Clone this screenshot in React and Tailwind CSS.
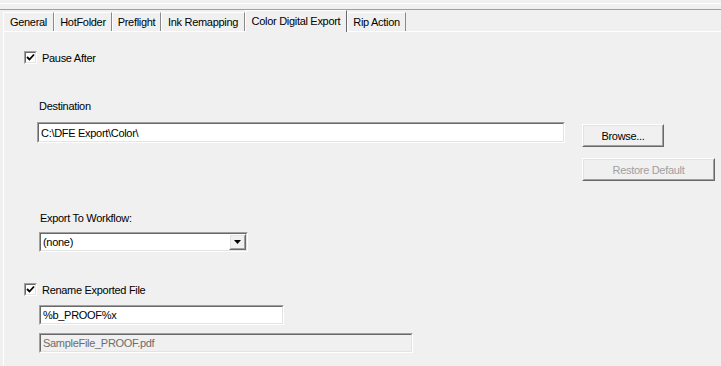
import React from 'react'

function Tab({ label, width, active }) {
  if (active) {
    return (
      <div
        className="relative z-10 -mb-px flex h-[22px] items-center justify-center border-l border-t border-r border-l-white border-t-white border-r-[#696969] bg-[#f0f0f0] pb-[2px]"
        style={{ width }}
      >
        {label}
      </div>
    )
  }
  return (
    <div
      className="flex h-[19px] items-center justify-center border-l border-t border-r border-l-white border-t-white border-r-[#8a8a8a] bg-[#f0f0f0]"
      style={{ width }}
    >
      {label}
    </div>
  )
}

function Checkbox({ label }) {
  return (
    <div className="flex h-[13px] items-center gap-[5px]">
      <div className="h-[13px] w-[13px] border-t border-l border-b border-r border-t-[#a0a0a0] border-l-[#a0a0a0] border-b-white border-r-white">
        <div className="flex h-full w-full items-center justify-center border-t border-l border-b border-r border-t-[#696969] border-l-[#696969] border-b-[#e3e3e3] border-r-[#e3e3e3] bg-white">
          <svg width="9" height="9" viewBox="0 0 9 9">
            <polyline points="1,4 3.5,6.5 8,1.5" fill="none" stroke="#000" strokeWidth="1.8" />
          </svg>
        </div>
      </div>
      <span>{label}</span>
    </div>
  )
}

function Sunken({ className, inner, children }) {
  return (
    <div className={`border-t border-l border-b border-r border-t-[#a0a0a0] border-l-[#a0a0a0] border-b-white border-r-white ${className}`}>
      <div className={`flex h-full w-full items-center border-t border-l border-b border-r border-t-[#696969] border-l-[#696969] border-b-[#e3e3e3] border-r-[#e3e3e3] ${inner}`}>
        {children}
      </div>
    </div>
  )
}

function Button({ className, disabled, children }) {
  return (
    <div className={`border-t border-l border-b border-r border-t-white border-l-white border-b-[#696969] border-r-[#696969] ${className}`}>
      <div
        className={`flex h-full w-full items-center justify-center border-t border-l border-b border-r border-t-[#e3e3e3] border-l-[#e3e3e3] border-b-[#a0a0a0] border-r-[#a0a0a0] bg-[#f0f0f0] ${
          disabled ? 'text-[#a0a0a0]' : 'text-black'
        }`}
      >
        {children}
      </div>
    </div>
  )
}

export default function App() {
  return (
    <div className="flex h-[366px] w-[721px] flex-col overflow-hidden bg-[#f0f0f0] font-['Liberation_Sans',Arial,sans-serif] text-[11px] leading-[12px] tracking-[-0.3px] text-black">
      <div className="h-[3px]" />
      <div className="h-px bg-white" />
      <div className="h-[5px]" />
      <div className="h-px bg-[#a0a0a0]" />

      <div className="flex h-[21px] items-end pl-[3px]">
        <Tab label="General" width={51} />
        <Tab label="HotFolder" width={58} />
        <Tab label="Preflight" width={49} />
        <Tab label="Ink Remapping" width={84} />
        <Tab label="Color Digital Export" width={102} active />
        <Tab label="Rip Action" width={59} />
      </div>

      <div className="ml-[3px] flex-1 border-l border-t border-white pl-[20px] pt-[19px]">
        <Checkbox label="Pause After" />

        <div className="ml-[15px] mt-[36px] h-[12px]">Destination</div>
        <div className="mt-[10px] flex items-start">
          <Sunken className="ml-[13px] h-[21px] w-[528px]" inner="bg-white pl-[2px]">
            C:\DFE Export\Color\
          </Sunken>
          <div className="ml-[17px] mt-[2px] flex flex-col gap-[11px]">
            <Button className="h-[23px] w-[82px]">Browse...</Button>
            <Button className="h-[23px] w-[133px]" disabled>
              Restore Default
            </Button>
          </div>
        </div>

        <div className="ml-[16px] mt-[31px] h-[12px]">Export To Workflow:</div>
        <Sunken className="ml-[15px] mt-[8px] h-[20px] w-[209px]" inner="bg-white pl-[2px]">
          <span className="flex-1">(none)</span>
          <Button className="h-full w-[17px]">
            <svg width="7" height="4" viewBox="0 0 7 4">
              <polygon points="0,0 7,0 3.5,4" fill="#000" />
            </svg>
          </Button>
        </Sunken>

        <div className="mt-[31px]">
          <Checkbox label="Rename Exported File" />
        </div>
        <Sunken className="ml-[15px] mt-[9px] h-[20px] w-[245px]" inner="bg-white pl-[2px]">
          %b_PROOF%x
        </Sunken>
        <Sunken className="ml-[15px] mt-[8px] h-[20px] w-[374px]" inner="bg-[#f0f0f0] pl-[2px] text-[#6d6d6d]">
          SampleFile_PROOF.pdf
        </Sunken>
      </div>
    </div>
  )
}
